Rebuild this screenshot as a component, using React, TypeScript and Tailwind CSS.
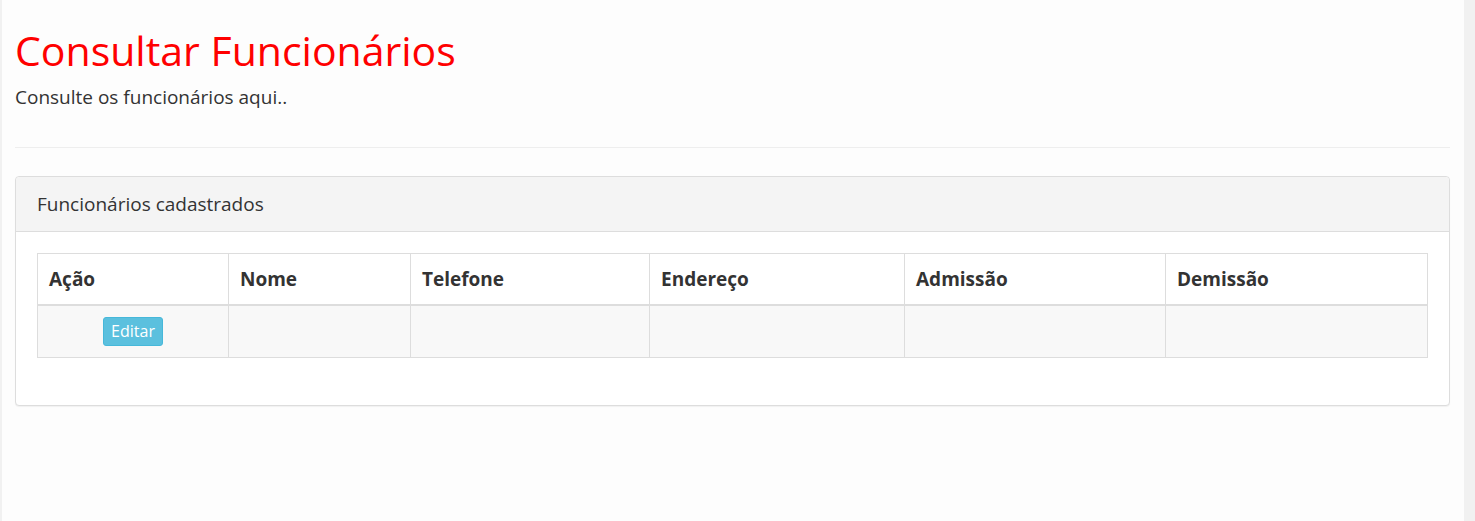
const COLUMNS = [
  { label: 'Ação', width: 'w-[191px]' },
  { label: 'Nome', width: 'w-[182px]' },
  { label: 'Telefone', width: 'w-[239px]' },
  { label: 'Endereço', width: 'w-[255px]' },
  { label: 'Admissão', width: 'w-[261px]' },
  { label: 'Demissão', width: '' },
];

export default function App() {
  return (
    <div className="flex h-[521px] bg-white font-['Open_Sans',sans-serif] text-[#333]">
      <div className="w-[2px] shrink-0 bg-[#f1f1f1]" />
      <main className="flex-1 bg-[#fdfdfd] pl-[13px] pr-[14px]">
        <div className="pt-[24px]">
          <h1 className="text-[41px] leading-[52px] text-[#ff0000]">Consultar Funcionários</h1>
          <p className="mt-[8px] text-[19px] leading-[26px]">Consulte os funcionários aqui..</p>
        </div>
        <hr className="mt-[37px] border-t border-[#eee]" />

        <section className="mt-[28px] rounded-[4px] border border-[#ddd] bg-white shadow-[0_1px_1px_rgba(0,0,0,0.05)]">
          <div className="flex h-[55px] items-center rounded-t-[4px] border-b border-[#ddd] bg-[#f4f4f4] px-[21px] text-[19px]">
            Funcionários cadastrados
          </div>
          <div className="px-[21px] pt-[21px] pb-[47px]">
            <table className="w-full border-collapse border border-[#ddd]">
              <thead>
                <tr className="h-[51px]">
                  {COLUMNS.map((c) => (
                    <th
                      key={c.label}
                      className={`${c.width} border border-b-2 border-[#ddd] px-[11px] text-left text-[19px] font-bold`}
                    >
                      {c.label}
                    </th>
                  ))}
                </tr>
              </thead>
              <tbody>
                <tr className="h-[53px] bg-[#f8f8f8]">
                  <td className="border border-[#ddd] text-center">
                    <button className="h-[29px] rounded-[3px] border border-[#46b8da] bg-[#5bc0de] px-[7px] text-[16px] leading-none text-white">
                      Editar
                    </button>
                  </td>
                  <td className="border border-[#ddd]" />
                  <td className="border border-[#ddd]" />
                  <td className="border border-[#ddd]" />
                  <td className="border border-[#ddd]" />
                  <td className="border border-[#ddd]" />
                </tr>
              </tbody>
            </table>
          </div>
        </section>
      </main>
      <div className="w-[11px] shrink-0 bg-[#f1f1f1]" />
    </div>
  );
}
